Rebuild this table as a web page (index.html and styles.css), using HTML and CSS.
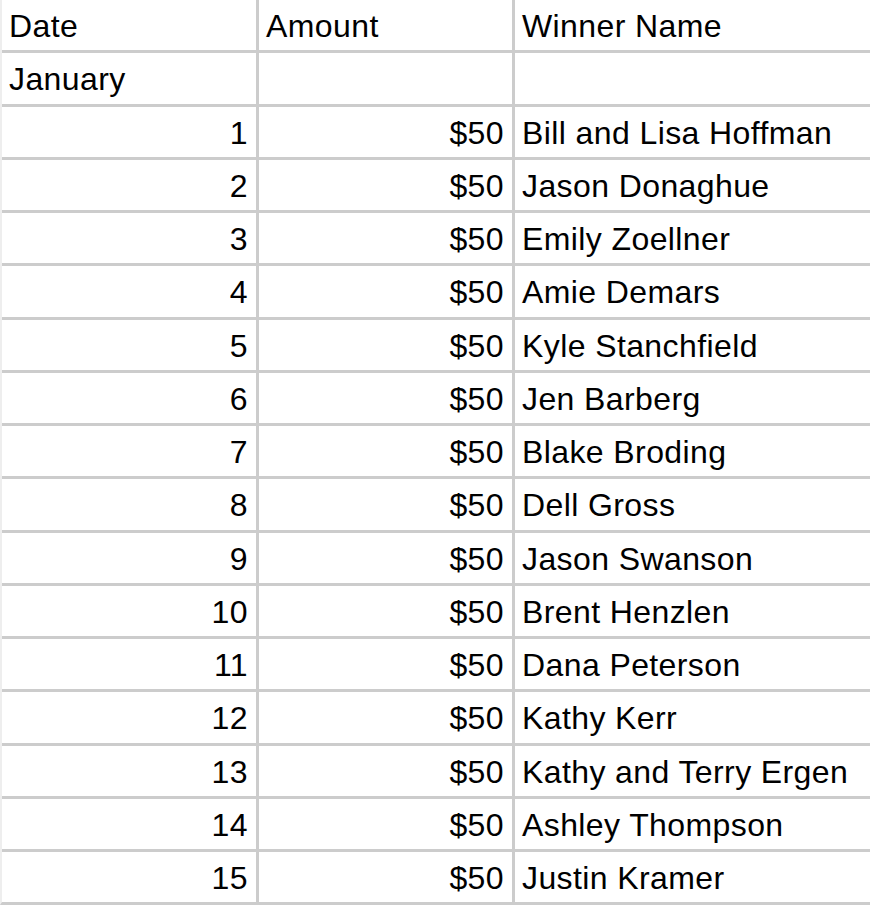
FILE: index.html
```html
<!DOCTYPE html>
<html>
<head>
<meta charset="utf-8">
<link rel="stylesheet" href="styles.css">
</head>
<body>
<div class="sheet">
  <div class="cell">Date</div><div class="cell">Amount</div><div class="cell">Winner Name</div>
  <div class="cell">January</div><div class="cell"></div><div class="cell"></div>
  <div class="cell num">1</div><div class="cell num">$50</div><div class="cell">Bill and Lisa Hoffman</div>
  <div class="cell num">2</div><div class="cell num">$50</div><div class="cell">Jason Donaghue</div>
  <div class="cell num">3</div><div class="cell num">$50</div><div class="cell">Emily Zoellner</div>
  <div class="cell num">4</div><div class="cell num">$50</div><div class="cell">Amie Demars</div>
  <div class="cell num">5</div><div class="cell num">$50</div><div class="cell">Kyle Stanchfield</div>
  <div class="cell num">6</div><div class="cell num">$50</div><div class="cell">Jen Barberg</div>
  <div class="cell num">7</div><div class="cell num">$50</div><div class="cell">Blake Broding</div>
  <div class="cell num">8</div><div class="cell num">$50</div><div class="cell">Dell Gross</div>
  <div class="cell num">9</div><div class="cell num">$50</div><div class="cell">Jason Swanson</div>
  <div class="cell num">10</div><div class="cell num">$50</div><div class="cell">Brent Henzlen</div>
  <div class="cell num">11</div><div class="cell num">$50</div><div class="cell">Dana Peterson</div>
  <div class="cell num">12</div><div class="cell num">$50</div><div class="cell">Kathy Kerr</div>
  <div class="cell num">13</div><div class="cell num">$50</div><div class="cell">Kathy and Terry Ergen</div>
  <div class="cell num">14</div><div class="cell num">$50</div><div class="cell">Ashley Thompson</div>
  <div class="cell num">15</div><div class="cell num">$50</div><div class="cell">Justin Kramer</div>
</div>
</body>
</html>
```
FILE: styles.css
```css
html, body {
  margin: 0;
  padding: 0;
  background: #ffffff;
}
.sheet {
  display: grid;
  grid-template-columns: 254px 253px 355px;
  grid-auto-rows: 50.25px;
  column-gap: 3px;
  row-gap: 3px;
  width: 868px;
  border-left: 2px solid #eeeeee;
  border-bottom: 3px solid #cccccc;
  background: #cccccc;
  font-family: "Liberation Sans", Arial, sans-serif;
  font-size: 32px;
  letter-spacing: 0.4px;
  color: #000000;
}
.cell {
  background: #ffffff;
  line-height: 50.25px;
  padding: 1px 8px 0 7px;
  white-space: nowrap;
  overflow: hidden;
}
.num {
  text-align: right;
}
```
